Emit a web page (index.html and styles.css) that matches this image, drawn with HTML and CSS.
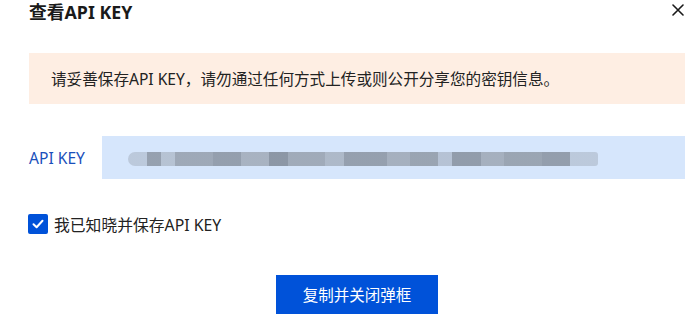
FILE: index.html
```html
<!DOCTYPE html>
<html lang="zh-CN">
<head>
<meta charset="utf-8">
<link rel="stylesheet" href="styles.css">
</head>
<body>
<div class="dialog">
  <div class="header">
    <h1 class="title">查看API KEY</h1>
    <button class="close" aria-label="关闭">
      <svg width="12" height="12" viewBox="0 0 12 12"><path d="M1 1L11 11M11 1L1 11" stroke="#1a1a1a" stroke-width="1.6" stroke-linecap="round"/></svg>
    </button>
  </div>
  <div class="alert">请妥善保存API KEY，请勿通过任何方式上传或则公开分享您的密钥信息。</div>
  <div class="key-row">
    <span class="key-label">API KEY</span>
    <div class="key-box"><span class="key-blur"></span></div>
  </div>
  <label class="check-row">
    <span class="checkbox">
      <svg width="14" height="14" viewBox="0 0 14 14"><path d="M2.5 7.2L5.6 10.2L11.5 3.8" fill="none" stroke="#fff" stroke-width="2" stroke-linecap="round" stroke-linejoin="round"/></svg>
    </span>
    <span class="check-text">我已知晓并保存API KEY</span>
  </label>
  <div class="footer">
    <button class="primary">复制并关闭弹框</button>
  </div>
</div>
</body>
</html>
```

FILE: styles.css
```css
html, body {
  margin: 0;
  padding: 0;
  background: #fff;
}
body {
  font-family: "Noto Sans", "Noto Sans CJK SC", sans-serif;
  color: #1f1f1f;
}
.dialog {
  width: 700px;
  height: 328px;
  box-sizing: border-box;
  padding: 0 15px 0 29px;
}
.header {
  display: flex;
  align-items: center;
  justify-content: space-between;
  height: 24px;
}
.title {
  margin: 0;
  font-size: 17.8px;
  font-weight: 700;
  line-height: 24px;
  color: #1a1a1a;
}
.close {
  border: 0;
  background: none;
  padding: 0;
  width: 12px;
  height: 12px;
  margin-right: 1px;
  margin-top: -4px;
  display: flex;
}
.alert {
  margin-top: 29px;
  height: 51px;
  background: #feeee3;
  display: flex;
  align-items: center;
  padding: 0 22px;
  font-size: 15.6px;
  color: #222;
}
.key-row {
  margin-top: 32px;
  display: flex;
  align-items: center;
}
.key-label {
  width: 73px;
  flex: none;
  color: #1a50bb;
  font-size: 15.6px;
}
.key-box {
  flex: 1;
  height: 43px;
  background: #d6e6fc;
  display: flex;
  align-items: center;
  padding-left: 26px;
}
.key-blur {
  width: 470px;
  height: 14px;
  margin-top: 2px;
  border-radius: 7px 3px 3px 7px;
  opacity: 0.9;
  background: linear-gradient(90deg,
    #b9c6d8 0 4%, #8f99a7 4% 7%, #b3bfcf 7% 10%, #98a2b0 10% 18%, #8d97a5 18% 24%,
    #a3adbb 24% 30%, #848e9c 30% 34%, #9aa4b2 34% 42%, #a9b4c3 42% 46%, #8e98a6 46% 55%,
    #a0aab8 55% 60%, #939daa 60% 66%, #b2bed0 66% 69%, #8a94a2 69% 75%, #a0aab8 75% 80%,
    #949eab 80% 88%, #8c96a4 88% 94%, #b9c6d8 94% 100%);
}
.check-row {
  margin-top: 35px;
  display: flex;
  align-items: center;
  height: 20px;
}
.checkbox {
  width: 20px;
  height: 20px;
  background: #0052d9;
  border-radius: 2px;
  display: flex;
  align-items: center;
  justify-content: center;
  margin-left: -1px;
}
.check-text {
  margin-left: 6px;
  font-size: 15.8px;
  color: #222;
}
.footer {
  margin-top: 41px;
  display: flex;
  justify-content: center;
}
.primary {
  width: 162px;
  height: 39px;
  border: 0;
  background: #0052d9;
  color: #fff;
  font-family: "Noto Sans", "Noto Sans CJK SC", sans-serif;
  font-size: 15.5px;
}
```
